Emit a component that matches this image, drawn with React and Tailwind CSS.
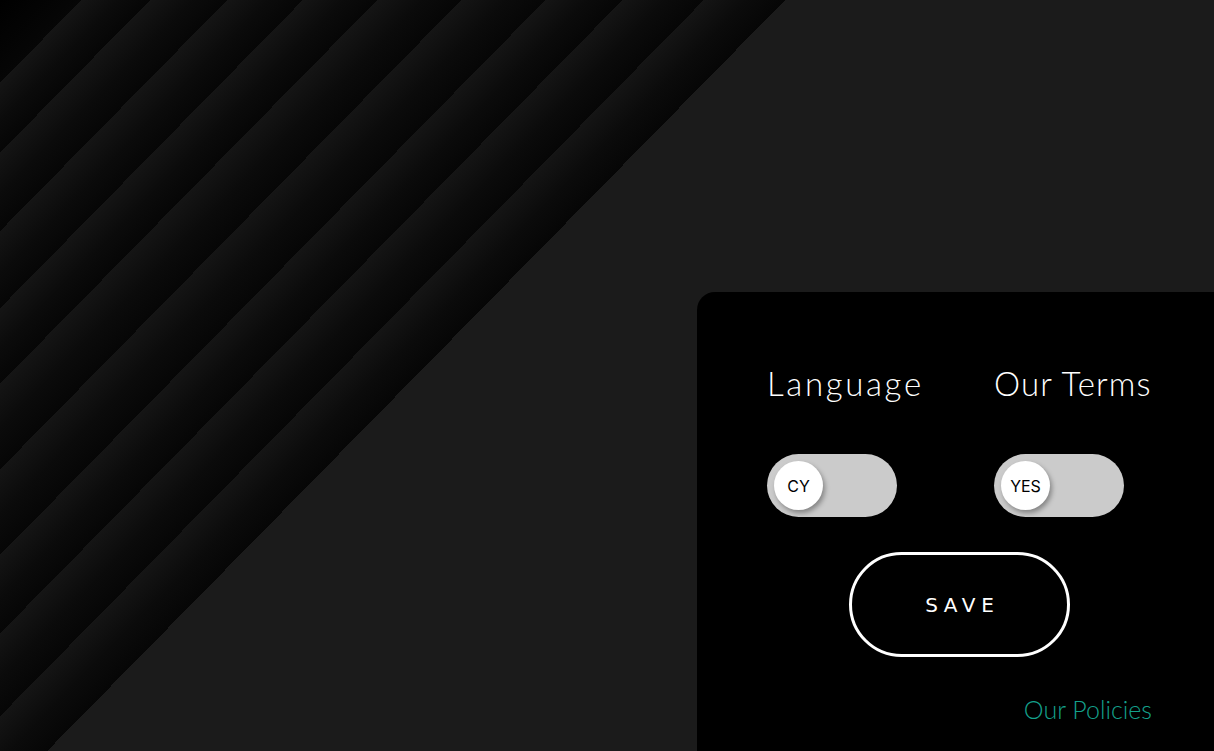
import React, { useState } from "react";

// two-state pill toggle, knob sits left when off
function Toggle({ label, on, onClick }) {
  return (
    <button
      onClick={onClick}
      className={`flex h-[63px] w-[130px] items-center rounded-full bg-[#cbcbcb] px-[7px] ${on ? "justify-end" : "justify-start"}`}
    >
      <span
        className="flex h-[49px] w-[49px] items-center justify-center rounded-full bg-white text-[16px] text-black shadow-[2px_3px_5px_rgba(0,0,0,0.35)]"
        style={{ fontFamily: "Inter, sans-serif" }}
      >
        {label}
      </span>
    </button>
  );
}

export default function App() {
  const [lang, setLang] = useState(false);
  const [terms, setTerms] = useState(false);

  return (
    <div
      className="flex h-[751px] w-full flex-col items-end justify-end overflow-hidden bg-[#1b1b1b] bg-[linear-gradient(134.5deg,#000_0px,#060606_58px,#151515_58px,#0b0b0b_85px,#060606_107px,#151515_107px,#0b0b0b_137px,#060606_162px,#151515_162px,#0b0b0b_192px,#060606_216px,#151515_216px,#0b0b0b_245px,#060606_269px,#151515_269px,#0b0b0b_301px,#060606_329px,#151515_329px,#0b0b0b_361px,#060606_389px,#151515_389px,#0b0b0b_419px,#060606_444px,#151515_444px,#0b0b0b_475px,#060606_502px,#151515_502px,#0b0b0b_533px,#060606_560px,#1b1b1b_560px,#1b1b1b_100%)]"
      style={{ fontFamily: "Lato, Inter, 'Noto Sans', sans-serif" }}
    >
      {/* settings panel */}
      <div className="h-[459px] w-[517px] rounded-tl-[18px] bg-black pl-[70px] pr-[62px] pt-[71px]">
        <div className="grid grid-cols-[227px_1fr]">
          <div className="text-[33px] font-light leading-[40px] tracking-[0.08em] text-white">Language</div>
          <div className="text-[33px] font-light leading-[40px] tracking-[0.035em] text-white">Our Terms</div>
        </div>

        <div className="mt-[51px] grid grid-cols-[227px_1fr]">
          <Toggle label="CY" on={lang} onClick={() => setLang(!lang)} />
          <Toggle label="YES" on={terms} onClick={() => setTerms(!terms)} />
        </div>

        <div className="mt-[35px] flex justify-center">
          <button
            className="flex h-[105px] w-[221px] items-center justify-center rounded-full border-[3px] border-white pl-[0.28em] text-[20px] tracking-[0.28em] text-white"
            style={{ fontFamily: "'DejaVu Sans', sans-serif" }}
          >
            SAVE
          </button>
        </div>

        <div className="mt-[38px] text-right text-[25px] font-light leading-[28px] text-[#14a08c]">
          Our Policies
        </div>
      </div>
    </div>
  );
}
